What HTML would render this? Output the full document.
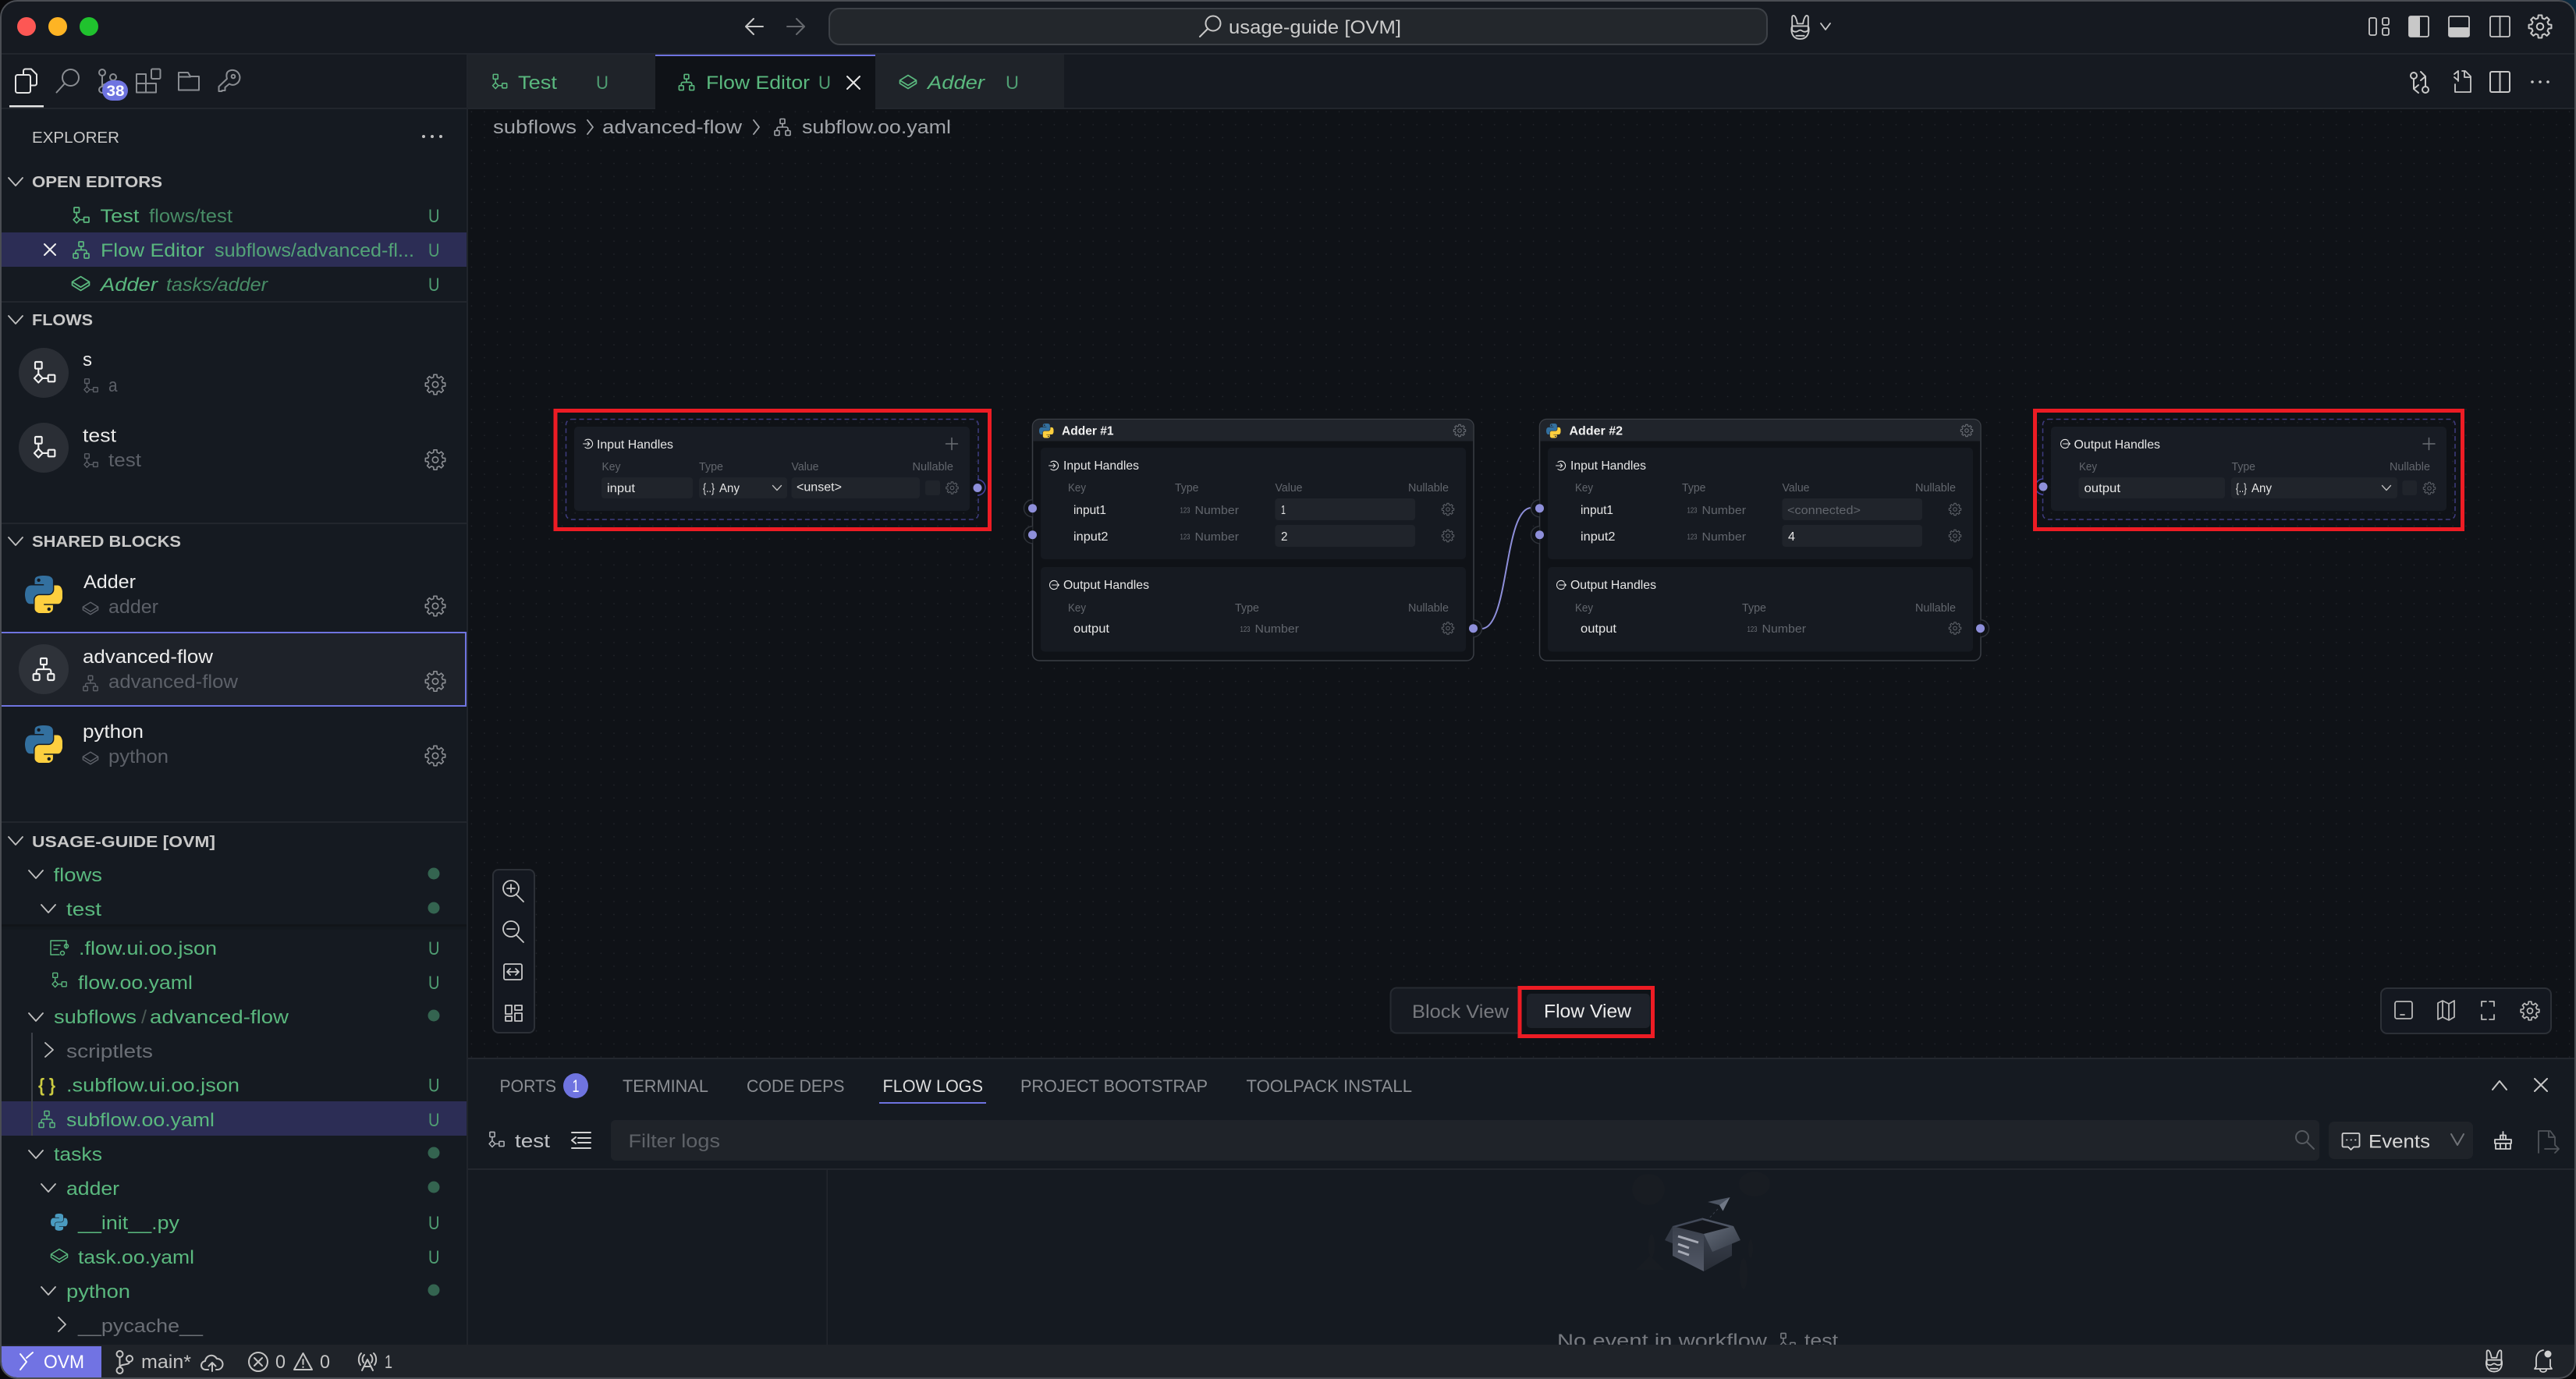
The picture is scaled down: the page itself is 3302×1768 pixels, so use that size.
<!DOCTYPE html>
<html lang="en"><head><meta charset="utf-8"><title>usage-guide [OVM]</title>
<style>
html,body{margin:0;padding:0;background:#000;width:3302px;height:1768px;overflow:hidden}
svg{display:block}
text{font-family:"Liberation Sans",sans-serif;font-size:24px;fill:#ccc;white-space:pre}
.h{font-size:20.5px;font-weight:700;fill:#c8c8c8}
.g{fill:#5ab87e}.gd{fill:#478b65}.u{fill:#4f9d72}
.w{fill:#ececec}.dim{fill:#5c6068}.gr{fill:#6b6f76}
.i{font-style:italic}
.n{font-size:16px;fill:#e6e6e6}.nb{font-size:16px;font-weight:700;fill:#f0f0f0}
.k{font-size:14.5px;fill:#62666d}.v{font-size:15.5px;fill:#e6e6e6}.m{font-size:15px;fill:#62666d}.s{font-size:10px;fill:#6b6f76}
.p{font-size:22px;fill:#8c8f94}
.ic{fill:none;stroke:currentColor;stroke-linecap:round;stroke-linejoin:round}
symbol *{vector-effect:none}
</style></head><body>
<svg xmlns="http://www.w3.org/2000/svg" width="3302" height="1768" viewBox="0 0 3302 1768">
<defs>
<pattern id="dots" x="703" y="690" width="16.6" height="16.6" patternUnits="userSpaceOnUse"><circle cx="1" cy="1" r=".8" fill="#25282e"/></pattern>
<symbol id="gear" viewBox="0 0 24 24"><path class="ic" d="M9.99 3.95L10.28 1.14H13.72L14.01 3.95L16.27 4.89L18.46 3.1L20.9 5.54L19.11 7.73L20.05 9.99L22.86 10.28V13.72L20.05 14.01L19.11 16.27L20.9 18.46L18.46 20.9L16.27 19.11L14.01 20.05L13.72 22.86H10.28L9.99 20.05L7.73 19.11L5.54 20.9L3.1 18.46L4.89 16.27L3.95 14.01L1.14 13.72V10.28L3.95 9.99L4.89 7.73L3.1 5.54L5.54 3.1L7.73 4.89Z"/><circle class="ic" cx="12" cy="12" r="3.2"/></symbol>
<symbol id="flow" viewBox="0 0 24 24"><rect class="ic" x="3" y="1.5" width="6.5" height="6.5" rx=".8"/><path class="ic" d="M6.2 8V13M6.2 13L10.2 17.2L6.2 21.4L2.2 17.2ZM10.2 17.2H15.5"/><rect class="ic" x="15.5" y="14" width="6.5" height="6.5" rx=".8"/></symbol>
<symbol id="sub" viewBox="0 0 24 24"><rect class="ic" x="9" y="1.5" width="6" height="6" rx=".8"/><path class="ic" d="M12 7.5V12M5 16.5V14A2 2 0 0 1 7 12H17A2 2 0 0 1 19 14V16.5"/><rect class="ic" x="2" y="16.5" width="6" height="6" rx="1"/><rect class="ic" x="16" y="16.5" width="6" height="6" rx="1"/></symbol>
<symbol id="task" viewBox="0 0 24 24"><path class="ic" d="M12 3.5L22.5 10L12 16.5L1.5 10ZM1.5 10V14L12 20.5L22.5 14V10"/></symbol>
<symbol id="py" viewBox="0 0 110 110"><path fill="#33709f" d="M54.92.001c-4.584.021-8.961.412-12.812 1.094C30.766 3.099 28.707 7.295 28.707 15.032v10.219h26.813v3.406H18.644c-7.793 0-14.617 4.684-16.752 13.594-2.462 10.213-2.571 16.586 0 27.25 1.906 7.938 6.458 13.594 14.25 13.594h9.219v-12.25c0-8.85 7.657-16.656 16.75-16.656h26.781c7.455 0 13.406-6.138 13.406-13.625V15.033c0-7.266-6.13-12.725-13.406-13.937C64.282.328 59.502-.02 54.92.001zM40.42 8.219c2.77 0 5.031 2.299 5.031 5.125 0 2.816-2.262 5.094-5.031 5.094-2.779 0-5.031-2.277-5.031-5.094 0-2.826 2.252-5.125 5.031-5.125z"/><path fill="#fdcf3f" d="M85.638 28.657v11.906c0 9.231-7.826 17-16.75 17H42.107c-7.336 0-13.406 6.278-13.406 13.625v25.531c0 7.266 6.319 11.54 13.406 13.625 8.487 2.496 16.626 2.947 26.781 0 6.75-1.954 13.406-5.888 13.406-13.625V86.501H55.513v-3.406h40.187c7.793 0 10.696-5.435 13.406-13.594 2.799-8.399 2.68-16.476 0-27.25-1.926-7.757-5.604-13.594-13.406-13.594H85.638zM70.575 93.313c2.779 0 5.031 2.277 5.031 5.094 0 2.826-2.252 5.125-5.031 5.125-2.77 0-5.031-2.299-5.031-5.125 0-2.817 2.261-5.094 5.031-5.094z"/></symbol>
<symbol id="inh" viewBox="0 0 24 24"><path class="ic" d="M5 4.5A10 10 0 1 1 5 19.5M1 12H15M10.5 7.5L15 12L10.5 16.5"/></symbol>
<symbol id="outh" viewBox="0 0 24 24"><path class="ic" d="M19 5.5A9.5 9.5 0 1 0 19 18.5M8 12H23M19 8L23 12L19 16"/></symbol>
<symbol id="bunny" viewBox="0 0 32 32"><path class="ic" d="M6 15V4C6 2 8 1 9.500 3C11 5 12 9 12.500 12H19.500C20 9 21 5 22.500 3C24 1 26 2 26 4V15M6 15C4 19 5 31 16 31S28 19 26 15M6 15H26V19C26 21 24 22 21 22C19 22 18 20 16 20S13 22 11 22C8 22 6 21 6 19ZM11 27H21"/></symbol>
<linearGradient id="bx" x1="0" y1="0" x2="1" y2="1"><stop offset="0" stop-color="#636b79"/><stop offset="1" stop-color="#343a45"/></linearGradient>
<linearGradient id="bl" x1="0" y1="0" x2="0" y2="1"><stop offset="0" stop-color="#3a404c"/><stop offset="1" stop-color="#525866"/></linearGradient>
<linearGradient id="br" x1="0" y1="0" x2="0" y2="1"><stop offset="0" stop-color="#3d4350"/><stop offset="1" stop-color="#272c35"/></linearGradient>
</defs>

<!-- base -->
<rect width="3302" height="1768" fill="#161a21"/>
<rect x="600" y="140" width="2702" height="1216" fill="#0f1217"/>
<rect x="600" y="140" width="2702" height="1216" fill="url(#dots)"/>
<!-- title bar -->
<rect y="68" width="3302" height="2" fill="#22262d"/>
<circle cx="34" cy="34" r="12" fill="#fd5754"/><circle cx="74" cy="34" r="12" fill="#feb424"/><circle cx="114" cy="34" r="12" fill="#20c22e"/>
<g class="ic" color="#c8c8c8" stroke-width="2"><path d="M978 34H957M966 24L956 34L966 44"/></g>
<g class="ic" color="#66696e" stroke-width="2"><path d="M1009 34H1030M1021 24L1031 34L1021 44"/></g>
<rect x="1063" y="11" width="1202" height="46" rx="13" fill="#23272c" stroke="#3d4147" stroke-width="2"/>
<g class="ic" color="#c8c8c8" stroke-width="2"><circle cx="1555" cy="30" r="9.500"/><path d="M1548 37L1538 47"/></g>
<text x="1575" y="43" textLength="221" lengthAdjust="spacingAndGlyphs" fill="#ccc">usage-guide [OVM]</text>
<use href="#bunny" x="2291" y="18" width="33" height="33" color="#c8c8c8" stroke-width="1.800"/>
<g class="ic" color="#c8c8c8" stroke-width="1.800"><path d="M2334 30L2340 38L2346 30"/>
<rect x="3037" y="23" width="9" height="22" rx="2"/><rect x="3054" y="23" width="8" height="9" rx="2"/><rect x="3054" y="36" width="8" height="9" rx="2"/>
<rect x="3088" y="21" width="25" height="26" rx="2"/><rect x="3139" y="21" width="26" height="26" rx="2"/><rect x="3192" y="21" width="25" height="26" rx="2"/><path d="M3204.500 21V47"/></g>
<rect x="3088" y="21" width="14" height="26" rx="2" fill="#c8c8c8"/><rect x="3139" y="35" width="26" height="12" rx="2" fill="#c8c8c8"/>
<use href="#gear" x="3240" y="18" width="32" height="32" color="#c8c8c8" stroke-width="1.500"/>

<!-- tab bar -->
<rect x="600" y="70" width="240" height="68" fill="#1f2329"/>
<rect x="840" y="70" width="282" height="70" fill="#0f1217"/>
<rect x="840" y="70" width="282" height="2" fill="#6e73e0"/>
<rect x="1122" y="70" width="242" height="68" fill="#1f2329"/>
<rect x="1364" y="138" width="1938" height="2" fill="#22262d"/>
<rect x="600" y="138" width="240" height="2" fill="#22262d"/><rect x="1122" y="138" width="242" height="2" fill="#22262d"/>
<use href="#flow" x="629" y="94" width="23" height="22" color="#5ab87e" stroke-width="1.700"/>
<text class="g" x="664" y="114" textLength="50" lengthAdjust="spacingAndGlyphs">Test</text>
<text class="u" x="764" y="114" textLength="16" lengthAdjust="spacingAndGlyphs">U</text>
<use href="#sub" x="868" y="94" width="24" height="23" color="#5ab87e" stroke-width="1.700"/>
<text class="g" x="905" y="114" textLength="133" lengthAdjust="spacingAndGlyphs">Flow Editor</text>
<text class="u" x="1049" y="114" textLength="16" lengthAdjust="spacingAndGlyphs">U</text>
<path class="ic" color="#e8e8e8" stroke-width="2" d="M1086 98L1102 114M1102 98L1086 114"/>
<use href="#task" x="1151" y="93" width="26" height="24" color="#5ab87e" stroke-width="1.700"/>
<text class="g i" x="1189" y="114" textLength="73" lengthAdjust="spacingAndGlyphs">Adder</text>
<text class="u" x="1289" y="114" textLength="17" lengthAdjust="spacingAndGlyphs">U</text>
<g class="ic" color="#c8c8c8" stroke-width="2"><circle cx="3094" cy="97" r="4"/><circle cx="3109" cy="115" r="4"/><path d="M3094 101V114L3100 119M3094 114L3100 109M3109 111V98L3103 92M3109 98L3103 103"/>
<path d="M3146 95L3151 91V104M3146 99L3151 103M3156 91H3160L3167 98V118H3147V108M3159 91V99H3167" stroke-width="1.800"/>
<rect x="3192" y="92" width="25" height="26" rx="2"/><path d="M3204.500 92V118"/></g>
<g fill="#c8c8c8"><circle cx="3246" cy="105" r="1.800"/><circle cx="3256" cy="105" r="1.800"/><circle cx="3266" cy="105" r="1.800"/></g>

<!-- breadcrumbs -->
<g fill="#a2a5aa">
<text x="632" y="171" textLength="107" lengthAdjust="spacingAndGlyphs" style="fill:#a2a5aa">subflows</text>
<text x="772" y="171" textLength="179" lengthAdjust="spacingAndGlyphs" style="fill:#a2a5aa">advanced-flow</text>
<text x="1028" y="171" textLength="191" lengthAdjust="spacingAndGlyphs" style="fill:#a2a5aa">subflow.oo.yaml</text>
</g>
<path class="ic" color="#a2a5aa" stroke-width="1.800" d="M753 154L760 163L753 172M966 154L973 163L966 172"/>
<use href="#sub" x="991" y="151" width="24" height="24" color="#a2a5aa" stroke-width="1.600"/>

<!-- Input node -->
<rect x="725.500" y="537.500" width="528.500" height="128.500" rx="7" fill="none" stroke="#3f3c80" stroke-width="1.500" stroke-dasharray="6 4"/>
<rect x="736" y="547" width="507" height="108" rx="5" fill="#181c24"/>
<use href="#inh" x="747" y="562" width="14" height="14" color="#e6e6e6" stroke-width="1.800"/>
<text class="n" x="765" y="575" textLength="98" lengthAdjust="spacingAndGlyphs">Input Handles</text>
<path class="ic" color="#6a6e74" stroke-width="1.500" d="M1220 561.500V576.500M1212.500 569H1227.500"/>
<text class="k" x="771.500" y="603" textLength="24" lengthAdjust="spacingAndGlyphs">Key</text>
<text class="k" x="896" y="603" textLength="31" lengthAdjust="spacingAndGlyphs">Type</text>
<text class="k" x="1014.500" y="603" textLength="35" lengthAdjust="spacingAndGlyphs">Value</text>
<text class="k" x="1169.500" y="603" textLength="52.500" lengthAdjust="spacingAndGlyphs">Nullable</text>
<rect x="771" y="612" width="117" height="27" rx="4" fill="#20242b"/>
<text class="v" x="778" y="631" textLength="36" lengthAdjust="spacingAndGlyphs">input</text>
<rect x="896" y="612" width="113" height="27" rx="4" fill="#20242b"/>
<text class="v" x="901" y="631" textLength="15" lengthAdjust="spacingAndGlyphs">{..}</text>
<text class="v" x="922" y="631" textLength="26" lengthAdjust="spacingAndGlyphs">Any</text>
<path class="ic" color="#c0c0c0" stroke-width="1.300" d="M990.500 622.500L996 628.500L1001.500 622.500"/>
<rect x="1014.500" y="612" width="164.500" height="27" rx="4" fill="#20242b"/>
<text class="v" x="1021" y="629.500" textLength="58" lengthAdjust="spacingAndGlyphs">&lt;unset&gt;</text>
<rect x="1186" y="616" width="19" height="19" rx="3" fill="#20242b"/>
<use href="#gear" x="1212" y="617" width="17" height="17" color="#5d6168" stroke-width="1.500"/>
<path d="M1253 615A10 10 0 0 1 1253 635" fill="#0f1217" stroke="#4745a0" stroke-width="1.500"/>
<circle cx="1253" cy="625.500" r="5.500" fill="#8e8fda"/>
<rect x="712" y="526.500" width="556.500" height="152" fill="none" stroke="#ed1c24" stroke-width="5"/>

<!-- edge -->
<path d="M1899 806C1935 806 1927 651 1963 651" fill="none" stroke="#8e8fda" stroke-width="2"/>

<!-- Adder 1 -->
<g>
<rect x="1323.500" y="537.500" width="565.500" height="309.500" rx="9" fill="#0f1217" stroke="#3a3e45" stroke-width="1.500"/>
<path d="M1324.500 565.500V546A8 8 0 0 1 1332.500 538.500H1880A8 8 0 0 1 1888 546V565.500Z" fill="#20242b"/>
<use href="#py" x="1332" y="543" width="18.500" height="18.500"/>
<text class="nb" x="1361" y="557.500" textLength="66.500" lengthAdjust="spacingAndGlyphs">Adder #1</text>
<use href="#gear" x="1862.500" y="543.500" width="17" height="17" color="#6b6f76" stroke-width="1.500"/>
<rect x="1334" y="574" width="545" height="143" rx="5" fill="#161a21"/>
<use href="#inh" x="1344" y="590" width="14" height="14" color="#e6e6e6" stroke-width="1.800"/>
<text class="n" x="1363" y="602" textLength="97" lengthAdjust="spacingAndGlyphs">Input Handles</text>
<text class="k" x="1369" y="630" textLength="23" lengthAdjust="spacingAndGlyphs">Key</text>
<text class="k" x="1506" y="630" textLength="30.500" lengthAdjust="spacingAndGlyphs">Type</text>
<text class="k" x="1634.500" y="630" textLength="35" lengthAdjust="spacingAndGlyphs">Value</text>
<text class="k" x="1805" y="630" textLength="52" lengthAdjust="spacingAndGlyphs">Nullable</text>
<text class="v" x="1376" y="659" textLength="42" lengthAdjust="spacingAndGlyphs">input1</text>
<text class="s" x="1512.500" y="657.500" textLength="13" lengthAdjust="spacingAndGlyphs">123</text>
<text class="m" x="1531.500" y="659" textLength="56.500" lengthAdjust="spacingAndGlyphs">Number</text>
<rect x="1634.500" y="639" width="179.500" height="28" rx="4" fill="#20242b"/>
<text class="v" x="1642" y="659" textLength="6" lengthAdjust="spacingAndGlyphs">1</text>
<use href="#gear" x="1847.500" y="644.500" width="17" height="17" color="#5d6168" stroke-width="1.500"/>
<text class="v" x="1376" y="693" textLength="44.500" lengthAdjust="spacingAndGlyphs">input2</text>
<text class="s" x="1512.500" y="691.500" textLength="13" lengthAdjust="spacingAndGlyphs">123</text>
<text class="m" x="1531.500" y="693" textLength="56.500" lengthAdjust="spacingAndGlyphs">Number</text>
<rect x="1634.500" y="673" width="179.500" height="28" rx="4" fill="#20242b"/>
<text class="v" x="1642" y="693" textLength="8.500" lengthAdjust="spacingAndGlyphs">2</text>
<use href="#gear" x="1847.500" y="678.500" width="17" height="17" color="#5d6168" stroke-width="1.500"/>
<rect x="1334" y="727" width="545" height="108.500" rx="5" fill="#161a21"/>
<use href="#outh" x="1344" y="743" width="14" height="14" color="#e6e6e6" stroke-width="1.800"/>
<text class="n" x="1363" y="755" textLength="110" lengthAdjust="spacingAndGlyphs">Output Handles</text>
<text class="k" x="1369" y="784" textLength="23" lengthAdjust="spacingAndGlyphs">Key</text>
<text class="k" x="1583" y="784" textLength="31" lengthAdjust="spacingAndGlyphs">Type</text>
<text class="k" x="1805" y="784" textLength="52" lengthAdjust="spacingAndGlyphs">Nullable</text>
<text class="v" x="1376" y="811" textLength="46" lengthAdjust="spacingAndGlyphs">output</text>
<text class="s" x="1589.500" y="810" textLength="13" lengthAdjust="spacingAndGlyphs">123</text>
<text class="m" x="1608.500" y="811" textLength="56.500" lengthAdjust="spacingAndGlyphs">Number</text>
<use href="#gear" x="1847.500" y="797" width="17" height="17" color="#5d6168" stroke-width="1.500"/>
<path d="M1323.500 640.700A11 11 0 0 0 1323.500 662.700" fill="#0f1217" stroke="#2e3239" stroke-width="1.500"/>
<path d="M1323.500 674.700A11 11 0 0 0 1323.500 696.700" fill="#0f1217" stroke="#2e3239" stroke-width="1.500"/>
<circle cx="1323.500" cy="651.700" r="5.500" fill="#8e8fda"/><circle cx="1323.500" cy="685.700" r="5.500" fill="#8e8fda"/>
<path d="M1888.500 794.700A11 11 0 0 1 1888.500 816.700" fill="#0f1217" stroke="#2e3239" stroke-width="1.500"/>
<circle cx="1888.500" cy="805.700" r="5.500" fill="#8e8fda"/>
</g>

<!-- Adder 2 -->
<g transform="translate(650 0)">
<rect x="1323.500" y="537.500" width="565.500" height="309.500" rx="9" fill="#0f1217" stroke="#3a3e45" stroke-width="1.500"/>
<path d="M1324.500 565.500V546A8 8 0 0 1 1332.500 538.500H1880A8 8 0 0 1 1888 546V565.500Z" fill="#20242b"/>
<use href="#py" x="1332" y="543" width="18.500" height="18.500"/>
<text class="nb" x="1361.500" y="557.500" textLength="68.500" lengthAdjust="spacingAndGlyphs">Adder #2</text>
<use href="#gear" x="1862.500" y="543.500" width="17" height="17" color="#6b6f76" stroke-width="1.500"/>
<rect x="1334" y="574" width="545" height="143" rx="5" fill="#161a21"/>
<use href="#inh" x="1344" y="590" width="14" height="14" color="#e6e6e6" stroke-width="1.800"/>
<text class="n" x="1363" y="602" textLength="97" lengthAdjust="spacingAndGlyphs">Input Handles</text>
<text class="k" x="1369" y="630" textLength="23" lengthAdjust="spacingAndGlyphs">Key</text>
<text class="k" x="1506" y="630" textLength="30.500" lengthAdjust="spacingAndGlyphs">Type</text>
<text class="k" x="1634.500" y="630" textLength="35" lengthAdjust="spacingAndGlyphs">Value</text>
<text class="k" x="1805" y="630" textLength="52" lengthAdjust="spacingAndGlyphs">Nullable</text>
<text class="v" x="1376" y="659" textLength="42" lengthAdjust="spacingAndGlyphs">input1</text>
<text class="s" x="1512.500" y="657.500" textLength="13" lengthAdjust="spacingAndGlyphs">123</text>
<text class="m" x="1531.500" y="659" textLength="56.500" lengthAdjust="spacingAndGlyphs">Number</text>
<rect x="1634.500" y="639" width="179.500" height="28" rx="4" fill="#20242b"/>
<text class="m" x="1641" y="659" textLength="94" lengthAdjust="spacingAndGlyphs">&lt;connected&gt;</text>
<use href="#gear" x="1847.500" y="644.500" width="17" height="17" color="#5d6168" stroke-width="1.500"/>
<text class="v" x="1376" y="693" textLength="44.500" lengthAdjust="spacingAndGlyphs">input2</text>
<text class="s" x="1512.500" y="691.500" textLength="13" lengthAdjust="spacingAndGlyphs">123</text>
<text class="m" x="1531.500" y="693" textLength="56.500" lengthAdjust="spacingAndGlyphs">Number</text>
<rect x="1634.500" y="673" width="179.500" height="28" rx="4" fill="#20242b"/>
<text class="v" x="1642" y="693" textLength="9" lengthAdjust="spacingAndGlyphs">4</text>
<use href="#gear" x="1847.500" y="678.500" width="17" height="17" color="#5d6168" stroke-width="1.500"/>
<rect x="1334" y="727" width="545" height="108.500" rx="5" fill="#161a21"/>
<use href="#outh" x="1344" y="743" width="14" height="14" color="#e6e6e6" stroke-width="1.800"/>
<text class="n" x="1363" y="755" textLength="110" lengthAdjust="spacingAndGlyphs">Output Handles</text>
<text class="k" x="1369" y="784" textLength="23" lengthAdjust="spacingAndGlyphs">Key</text>
<text class="k" x="1583" y="784" textLength="31" lengthAdjust="spacingAndGlyphs">Type</text>
<text class="k" x="1805" y="784" textLength="52" lengthAdjust="spacingAndGlyphs">Nullable</text>
<text class="v" x="1376" y="811" textLength="46" lengthAdjust="spacingAndGlyphs">output</text>
<text class="s" x="1589.500" y="810" textLength="13" lengthAdjust="spacingAndGlyphs">123</text>
<text class="m" x="1608.500" y="811" textLength="56.500" lengthAdjust="spacingAndGlyphs">Number</text>
<use href="#gear" x="1847.500" y="797" width="17" height="17" color="#5d6168" stroke-width="1.500"/>
<path d="M1323.500 640.700A11 11 0 0 0 1323.500 662.700" fill="#0f1217" stroke="#2e3239" stroke-width="1.500"/>
<path d="M1323.500 674.700A11 11 0 0 0 1323.500 696.700" fill="#0f1217" stroke="#2e3239" stroke-width="1.500"/>
<circle cx="1323.500" cy="651.700" r="5.500" fill="#8e8fda"/><circle cx="1323.500" cy="685.700" r="5.500" fill="#8e8fda"/>
<path d="M1888.500 794.700A11 11 0 0 1 1888.500 816.700" fill="#0f1217" stroke="#2e3239" stroke-width="1.500"/>
<circle cx="1888.500" cy="805.700" r="5.500" fill="#8e8fda"/>
</g>

<!-- Output node -->
<rect x="2618.500" y="537.500" width="528.500" height="128.500" rx="7" fill="none" stroke="#3f3c80" stroke-width="1.500" stroke-dasharray="6 4"/>
<rect x="2629" y="547" width="507" height="108" rx="5" fill="#181c24"/>
<use href="#outh" x="2640" y="562" width="14" height="14" color="#e6e6e6" stroke-width="1.800"/>
<text class="n" x="2658.500" y="575" textLength="110.500" lengthAdjust="spacingAndGlyphs">Output Handles</text>
<path class="ic" color="#6a6e74" stroke-width="1.500" d="M3113.500 561.500V576.500M3106 569H3121"/>
<text class="k" x="2665" y="603" textLength="23" lengthAdjust="spacingAndGlyphs">Key</text>
<text class="k" x="2860.500" y="603" textLength="30.500" lengthAdjust="spacingAndGlyphs">Type</text>
<text class="k" x="3063" y="603" textLength="52" lengthAdjust="spacingAndGlyphs">Nullable</text>
<rect x="2664.500" y="612" width="187.500" height="27" rx="4" fill="#20242b"/>
<text class="v" x="2671.500" y="631" textLength="46.500" lengthAdjust="spacingAndGlyphs">output</text>
<rect x="2860" y="612" width="213" height="27" rx="4" fill="#20242b"/>
<text class="v" x="2866" y="631" textLength="14" lengthAdjust="spacingAndGlyphs">{..}</text>
<text class="v" x="2886" y="631" textLength="26" lengthAdjust="spacingAndGlyphs">Any</text>
<path class="ic" color="#c0c0c0" stroke-width="1.300" d="M3053.500 622.500L3059 628.500L3064.500 622.500"/>
<rect x="3079.500" y="616" width="18.500" height="19" rx="3" fill="#20242b"/>
<use href="#gear" x="3105.500" y="617.500" width="17" height="17" color="#5d6168" stroke-width="1.500"/>
<path d="M2619 614A10 10 0 0 0 2619 634" fill="#0f1217" stroke="#4745a0" stroke-width="1.500"/>
<circle cx="2619" cy="624" r="5.500" fill="#8e8fda"/>
<rect x="2608.500" y="526.500" width="548" height="152" fill="none" stroke="#ed1c24" stroke-width="5"/>

<!-- zoom controls -->
<rect x="632" y="1115" width="53" height="209" rx="7" fill="#141820" stroke="#2c3037" stroke-width="2"/>
<g class="ic" color="#c8c8c8" stroke-width="1.800">
<circle cx="655" cy="1139" r="10"/><path d="M662 1147L671 1156M655 1134V1144M650 1139H660"/>
<circle cx="655" cy="1191" r="10"/><path d="M662 1199L671 1208M650 1191H660"/>
<rect x="646" y="1236" width="23" height="20" rx="2"/><path d="M650 1246H665M654 1242L650 1246L654 1250M661 1242L665 1246L661 1250"/>
<rect x="648" y="1289" width="8" height="11"/><rect x="660" y="1289" width="9" height="6"/><rect x="648" y="1303" width="8" height="6"/><rect x="660" y="1299" width="9" height="10"/>
</g>
<!-- view toggle -->
<rect x="1782.500" y="1266.500" width="200" height="58" rx="8" fill="#161a21" stroke="#262a31" stroke-width="2"/>
<text x="1810" y="1305" textLength="124" lengthAdjust="spacingAndGlyphs" style="fill:#77797e">Block View</text>
<rect x="1947" y="1267" width="172" height="62" fill="#0f1217"/>
<rect x="1957" y="1274" width="158" height="44" rx="5" fill="#1e222a"/>
<text class="w" x="1979" y="1304.500" textLength="112" lengthAdjust="spacingAndGlyphs">Flow View</text>
<rect x="1948" y="1266.500" width="170.500" height="62" fill="none" stroke="#ed1c24" stroke-width="5"/>
<rect x="3052" y="1267" width="218" height="58" rx="8" fill="#141820" stroke="#2c3037" stroke-width="2"/>
<g class="ic" color="#b8b8b8" stroke-width="1.800">
<rect x="3070" y="1284" width="22" height="22" rx="2.500"/><path d="M3077 1301H3082"/>
<path d="M3125 1286L3131 1283L3139 1287L3146 1283V1304L3139 1308L3131 1304L3125 1307ZM3131 1283V1304M3139 1287V1308"/>
<path d="M3181 1290V1284H3187M3191 1284H3197V1290M3197 1301V1307H3191M3187 1307H3181V1301"/>
</g>
<use href="#gear" x="3230" y="1283" width="26" height="26" color="#b8b8b8" stroke-width="1.600"/>

<!-- panel -->
<rect x="600" y="1356" width="2702" height="368" fill="#151a21"/>
<rect x="600" y="1356" width="2702" height="2" fill="#23272e"/>
<text class="p" x="640.500" y="1400" textLength="72.500" lengthAdjust="spacingAndGlyphs">PORTS</text>
<rect x="722" y="1376" width="32" height="32" rx="16" fill="#6f74e0"/>
<text x="733.500" y="1400" textLength="9" lengthAdjust="spacingAndGlyphs" style="fill:#fff;font-size:22px">1</text>
<text class="p" x="798" y="1400" textLength="110" lengthAdjust="spacingAndGlyphs">TERMINAL</text>
<text class="p" x="957" y="1400" textLength="125.500" lengthAdjust="spacingAndGlyphs">CODE DEPS</text>
<text x="1131.500" y="1400" textLength="128.500" lengthAdjust="spacingAndGlyphs" style="font-size:22px;fill:#dcdcdc">FLOW LOGS</text>
<text class="p" x="1308" y="1400" textLength="240" lengthAdjust="spacingAndGlyphs">PROJECT BOOTSTRAP</text>
<text class="p" x="1597.500" y="1400" textLength="212.500" lengthAdjust="spacingAndGlyphs">TOOLPACK INSTALL</text>
<rect x="1127" y="1413" width="137" height="2" fill="#6e73e0"/>
<g class="ic" color="#c8c8c8" stroke-width="2"><path d="M3195 1397L3204 1386L3213 1397M3249 1383L3265 1399M3265 1383L3249 1399"/></g>
<use href="#flow" x="625" y="1450" width="23" height="23" color="#b0b3b8" stroke-width="1.600"/>
<text x="660" y="1471" textLength="45" lengthAdjust="spacingAndGlyphs" style="fill:#c0c2c6">test</text>
<g class="ic" color="#d4d4d4" stroke-width="2"><path d="M733 1452H757M741 1459H757M741 1465H757M733 1472H757M738 1458L733 1462L738 1466"/></g>
<rect x="783" y="1436" width="2190" height="52" rx="6" fill="#1f2329"/>
<text x="805.500" y="1471" textLength="117.500" lengthAdjust="spacingAndGlyphs" style="fill:#5e6268">Filter logs</text>
<g class="ic" color="#55595f" stroke-width="2"><circle cx="2951" cy="1458" r="8"/><path d="M2957 1464L2966 1473"/></g>
<rect x="2985" y="1438" width="185" height="48" rx="7" fill="#1f2329"/>
<g class="ic" color="#d0d0d0" stroke-width="1.800"><path d="M3004 1453H3023A1.500 1.500 0 0 1 3024.500 1454.500V1469A1.500 1.500 0 0 1 3023 1470.500H3017L3013.500 1474L3010 1470.500H3004A1.500 1.500 0 0 1 3002.500 1469V1454.500A1.500 1.500 0 0 1 3004 1453Z"/><path d="M3008 1461.500H3008.500M3013.500 1461.500H3014M3019 1461.500H3019.500"/></g>
<text x="3036" y="1471.500" textLength="79" lengthAdjust="spacingAndGlyphs" style="fill:#d8d8d8">Events</text>
<path class="ic" color="#707378" stroke-width="2" d="M3142 1454L3150 1468L3158 1454"/>
<g class="ic" color="#d0d0d0" stroke-width="1.800"><path d="M3208.500 1451V1461M3205 1461V1455.500H3212V1461M3198 1461H3219V1466H3198ZM3199 1466V1473H3218V1466M3205 1466V1473M3212 1466V1473"/></g>
<g class="ic" color="#50545a" stroke-width="1.800"><path d="M3254 1478V1450H3269L3275 1458V1468M3267 1450V1458H3275M3262 1473H3280M3275 1468L3280 1473L3275 1478"/></g>
<rect x="600" y="1498" width="2702" height="2" fill="#23272e"/>
<rect x="1059.500" y="1500" width="1.500" height="224" fill="#22262d"/>
<!-- empty illustration -->
<g fill="#181c22">
<ellipse cx="2113" cy="1525" rx="21" ry="20"/><ellipse cx="2249" cy="1518" rx="20" ry="16"/>
<path d="M2097 1628L2115 1610L2133 1628Z"/><ellipse cx="2235" cy="1633" rx="5" ry="20"/><ellipse cx="2117" cy="1597" rx="4" ry="15"/><ellipse cx="2244" cy="1601" rx="3" ry="12"/>
</g>
<path d="M2189 1541L2217.500 1535L2208.500 1552.500L2204 1545Z" fill="#4c5462"/>
<path d="M2204 1545L2217.500 1535L2208.500 1552.500Z" fill="#707886"/>
<path d="M2202 1550L2188 1565" stroke="#3a404b" stroke-width="1" stroke-dasharray="3 3" fill="none"/>
<path d="M2144 1572L2182 1561.500L2222 1572L2184 1582Z" fill="#14171d"/>
<path d="M2144 1572L2134 1590L2146 1595Z" fill="#333945"/>
<path d="M2182 1561.500L2222 1572L2219 1574L2182 1564Z" fill="#4e5564"/>
<path d="M2144 1572L2182 1561.500L2183 1564L2146 1574Z" fill="#424958"/>
<path d="M2144 1572L2184 1582V1630L2144 1610Z" fill="url(#bl)"/>
<path d="M2184 1582L2220 1573V1610L2184 1630Z" fill="url(#br)"/>
<path d="M2222 1572L2231 1590L2195 1605L2184 1582Z" fill="url(#bx)"/>
<g stroke="#a6aab5" stroke-width="3"><path d="M2151 1585L2177 1593M2151 1595L2165 1600M2151 1604L2165 1609"/></g>
<text x="1996" y="1727" textLength="269" lengthAdjust="spacingAndGlyphs" style="fill:#777a80">No event in workflow</text>
<use href="#flow" x="2280" y="1708" width="23" height="23" color="#777a80" stroke-width="1.600"/>
<text x="2313" y="1727" textLength="43" lengthAdjust="spacingAndGlyphs" style="fill:#777a80">test</text>

<!-- sidebar -->
<rect x="0" y="139" width="598" height="1585" fill="#151a21"/>
<rect x="598" y="70" width="2" height="1654" fill="#20242b"/>
<rect x="0" y="138" width="598" height="2" fill="#22262d"/>
<!-- activity -->
<g class="ic" color="#e4e4e4" stroke-width="2"><path d="M30 96V91A2.500 2.500 0 0 1 32.500 88.500H40L47 95.500V107A2.500 2.500 0 0 1 44.500 109.500H39"/><rect x="20" y="96" width="19" height="23" rx="2.500"/></g>
<rect x="12" y="135" width="44" height="2.500" fill="#e8e8e8"/>
<g class="ic" color="#8a8d92" stroke-width="2">
<circle cx="90.500" cy="99.500" r="10.500"/><path d="M83 107L72.500 118.500"/>
<circle cx="131" cy="93" r="4"/><circle cx="131" cy="115" r="4"/><circle cx="145" cy="99" r="4"/><path d="M131 97V111M145 103C145 108 131 106 131 111"/>
<path d="M175 95H187V107H200V118.500H175ZM175 107H187V118.500"/><rect x="194" y="88.500" width="11.500" height="12.500" rx="1.500"/>
<path d="M229 93H241L244 98H255V115.500H229ZM229 98.500H244"/>
<path d="M292 92A9.500 9.500 0 1 1 302 108C299.500 109.500 296 109 294 107.500L288.500 112V116H284.500V117H280.500V111L291 101C290 98 290 94 292 92Z"/><circle cx="299" cy="98" r="2.300"/>
</g>
<rect x="131" y="103" width="33" height="26" rx="13" fill="#6f74e0"/>
<text x="136.500" y="123" textLength="23" lengthAdjust="spacingAndGlyphs" style="font-size:19px;font-weight:700;fill:#fff">38</text>

<text x="41" y="183" textLength="112" lengthAdjust="spacingAndGlyphs" style="font-size:20.5px;fill:#c8c8c8">EXPLORER</text>
<g fill="#c0c0c0"><circle cx="543" cy="175" r="2"/><circle cx="554" cy="175" r="2"/><circle cx="565" cy="175" r="2"/></g>

<!-- open editors -->
<path class="ic" color="#c0c0c0" stroke-width="1.800" d="M11 228L20 238L29 228M11 405L20 415L29 405M11 689L20 699L29 689M11 1073L20 1083L29 1073"/>
<text class="h" x="41" y="240" textLength="167" lengthAdjust="spacingAndGlyphs">OPEN EDITORS</text>
<use href="#flow" x="92" y="264" width="24" height="25" color="#5ab87e" stroke-width="1.700"/>
<text class="g" x="128.500" y="285" textLength="50" lengthAdjust="spacingAndGlyphs">Test</text>
<text class="gd" x="191" y="285" textLength="107" lengthAdjust="spacingAndGlyphs">flows/test</text>
<text class="u" x="549" y="285" textLength="14.500" lengthAdjust="spacingAndGlyphs">U</text>
<rect y="298" width="598" height="44" fill="#2c2d55"/>
<path class="ic" color="#f0f0f0" stroke-width="2" d="M57 313L71 327M71 313L57 327"/>
<use href="#sub" x="92" y="308" width="24" height="25" color="#5ab87e" stroke-width="1.700"/>
<text class="g" x="129" y="329" textLength="133" lengthAdjust="spacingAndGlyphs">Flow Editor</text>
<text class="g" x="275" y="329" textLength="256" lengthAdjust="spacingAndGlyphs" style="opacity:.85">subflows/advanced-fl...</text>
<text class="u" x="549" y="329" textLength="14.500" lengthAdjust="spacingAndGlyphs">U</text>
<use href="#task" x="90" y="351" width="27" height="25" color="#5ab87e" stroke-width="1.700"/>
<text class="g i" x="129" y="373" textLength="73" lengthAdjust="spacingAndGlyphs">Adder</text>
<text class="gd i" x="213" y="373" textLength="130" lengthAdjust="spacingAndGlyphs">tasks/adder</text>
<text class="u" x="549" y="373" textLength="14.500" lengthAdjust="spacingAndGlyphs">U</text>
<rect y="386" width="598" height="2" fill="#22262d"/>

<!-- flows -->
<text class="h" x="41" y="417" textLength="78" lengthAdjust="spacingAndGlyphs">FLOWS</text>
<circle cx="56" cy="478" r="32" fill="#2a2e35"/>
<use href="#flow" x="41" y="462" width="32" height="32" color="#f0f0f0" stroke-width="1.600"/>
<text class="w" x="106" y="469" textLength="12" lengthAdjust="spacingAndGlyphs">s</text>
<use href="#flow" x="106" y="484" width="21" height="22" color="#5c6068" stroke-width="1.600"/>
<text class="dim" x="139" y="502" textLength="11.500" lengthAdjust="spacingAndGlyphs">a</text>
<use href="#gear" x="544" y="479" width="28" height="28" color="#8a8d92" stroke-width="1.400"/>
<circle cx="56" cy="574" r="32" fill="#2a2e35"/>
<use href="#flow" x="41" y="558" width="32" height="32" color="#f0f0f0" stroke-width="1.600"/>
<text class="w" x="106" y="566.500" textLength="43" lengthAdjust="spacingAndGlyphs">test</text>
<use href="#flow" x="106" y="580" width="21" height="22" color="#5c6068" stroke-width="1.600"/>
<text class="dim" x="139" y="598" textLength="42" lengthAdjust="spacingAndGlyphs">test</text>
<use href="#gear" x="544" y="575.500" width="28" height="28" color="#8a8d92" stroke-width="1.400"/>
<rect y="670" width="598" height="2" fill="#22262d"/>

<!-- shared blocks -->
<text class="h" x="41" y="701" textLength="191" lengthAdjust="spacingAndGlyphs">SHARED BLOCKS</text>
<use href="#py" x="32" y="738" width="48" height="48"/>
<text class="w" x="107" y="754" textLength="67" lengthAdjust="spacingAndGlyphs">Adder</text>
<use href="#task" x="104" y="769" width="24" height="22" color="#5c6068" stroke-width="1.600"/>
<text class="dim" x="139" y="786" textLength="64" lengthAdjust="spacingAndGlyphs">adder</text>
<use href="#gear" x="544" y="763" width="28" height="28" color="#8a8d92" stroke-width="1.400"/>
<rect x="1" y="811" width="596" height="94" fill="#1e2229" stroke="#6f74e0" stroke-width="2"/>
<circle cx="56" cy="858" r="32" fill="#2e3239"/>
<use href="#sub" x="40" y="842" width="32" height="32" color="#f0f0f0" stroke-width="1.600"/>
<text class="w" x="106" y="850" textLength="167" lengthAdjust="spacingAndGlyphs">advanced-flow</text>
<use href="#sub" x="105" y="865" width="22" height="22" color="#5c6068" stroke-width="1.600"/>
<text class="dim" x="139" y="882" textLength="166" lengthAdjust="spacingAndGlyphs">advanced-flow</text>
<use href="#gear" x="544" y="859.500" width="28" height="28" color="#8a8d92" stroke-width="1.400"/>
<use href="#py" x="32" y="930" width="48" height="48"/>
<text class="w" x="106" y="946" textLength="78" lengthAdjust="spacingAndGlyphs">python</text>
<use href="#task" x="104" y="961" width="24" height="22" color="#5c6068" stroke-width="1.600"/>
<text class="dim" x="139" y="978" textLength="77" lengthAdjust="spacingAndGlyphs">python</text>
<use href="#gear" x="544" y="955" width="28" height="28" color="#8a8d92" stroke-width="1.400"/>
<rect y="1053" width="598" height="2" fill="#22262d"/>

<!-- tree -->
<text class="h" x="41" y="1086" textLength="235" lengthAdjust="spacingAndGlyphs">USAGE-GUIDE [OVM]</text>
<g class="ic" color="#c0c0c0" stroke-width="1.800"><path d="M37 1116L46 1126L55 1116M53 1160L62 1170L71 1160M37 1299L46 1309L55 1299M37 1475L46 1485L55 1475M53 1518L62 1528L71 1518M53 1650L62 1660L71 1650M58 1337L68 1346L58 1355M75 1689L84 1698L75 1707"/></g>
<rect y="1185" width="598" height="3" fill="#0f1217" opacity=".7"/>
<rect y="1188" width="598" height="4" fill="#0f1217" opacity=".25"/>
<g fill="#346450"><circle cx="556" cy="1120" r="7.500"/><circle cx="556" cy="1164" r="7.500"/><circle cx="556" cy="1302" r="7.500"/><circle cx="556" cy="1478" r="7.500"/><circle cx="556" cy="1522" r="7.500"/><circle cx="556" cy="1654" r="7.500"/></g>
<text class="g" x="68.500" y="1130" textLength="62.500" lengthAdjust="spacingAndGlyphs">flows</text>
<text class="g" x="85" y="1174" textLength="45" lengthAdjust="spacingAndGlyphs">test</text>
<g class="ic" color="#5ab87e" stroke-width="1.500"><path d="M65 1206H85V1216M65 1206V1224H76M69 1212H77M69 1217H74"/><circle cx="80" cy="1222" r="2.500"/><circle cx="85" cy="1213" r="2.500"/></g>
<text class="g" x="101" y="1224" textLength="177" lengthAdjust="spacingAndGlyphs">.flow.ui.oo.json</text>
<text class="u" x="549" y="1224" textLength="14.500" lengthAdjust="spacingAndGlyphs">U</text>
<use href="#flow" x="65" y="1246" width="22" height="22" color="#5ab87e" stroke-width="1.500"/>
<text class="g" x="100" y="1268" textLength="147" lengthAdjust="spacingAndGlyphs">flow.oo.yaml</text>
<text class="u" x="549" y="1268" textLength="14.500" lengthAdjust="spacingAndGlyphs">U</text>
<text class="g" x="69" y="1312" textLength="106" lengthAdjust="spacingAndGlyphs">subflows</text>
<text x="181" y="1312" textLength="7" lengthAdjust="spacingAndGlyphs" style="fill:#4c5a55">/</text>
<text class="g" x="192" y="1312" textLength="178" lengthAdjust="spacingAndGlyphs">advanced-flow</text>
<text class="gr" x="85" y="1356" textLength="111" lengthAdjust="spacingAndGlyphs">scriptlets</text>
<text x="49" y="1399.500" textLength="22" lengthAdjust="spacingAndGlyphs" style="fill:#cbcb41;font-weight:700">{ }</text>
<text class="g" x="85" y="1399.500" textLength="222" lengthAdjust="spacingAndGlyphs">.subflow.ui.oo.json</text>
<text class="u" x="549" y="1399.500" textLength="14.500" lengthAdjust="spacingAndGlyphs">U</text>
<rect y="1412" width="598" height="44" fill="#2c2d55"/>
<rect x="40" y="1324" width="2" height="132" fill="#3c4048"/>
<use href="#sub" x="48" y="1423" width="24" height="24" color="#5ab87e" stroke-width="1.500"/>
<text class="g" x="85" y="1444" textLength="190" lengthAdjust="spacingAndGlyphs">subflow.oo.yaml</text>
<text class="u" x="549" y="1444" textLength="14.500" lengthAdjust="spacingAndGlyphs">U</text>
<text class="g" x="69" y="1488" textLength="62" lengthAdjust="spacingAndGlyphs">tasks</text>
<text class="g" x="85" y="1532" textLength="68" lengthAdjust="spacingAndGlyphs">adder</text>
<g transform="translate(65 1556) scale(.195)"><path fill="#4a9bc0" d="M54.92.001c-4.584.021-8.961.412-12.812 1.094C30.766 3.099 28.707 7.295 28.707 15.032v10.219h26.813v3.406H18.644c-7.793 0-14.617 4.684-16.752 13.594-2.462 10.213-2.571 16.586 0 27.25 1.906 7.938 6.458 13.594 14.25 13.594h9.219v-12.25c0-8.85 7.657-16.656 16.75-16.656h26.781c7.455 0 13.406-6.138 13.406-13.625V15.033c0-7.266-6.13-12.725-13.406-13.937C64.282.328 59.502-.02 54.92.001z"/><path fill="#4a9bc0" d="M85.638 28.657v11.906c0 9.231-7.826 17-16.75 17H42.107c-7.336 0-13.406 6.278-13.406 13.625v25.531c0 7.266 6.319 11.54 13.406 13.625 8.487 2.496 16.626 2.947 26.781 0 6.75-1.954 13.406-5.888 13.406-13.625V86.501H55.513v-3.406h40.187c7.793 0 10.696-5.435 13.406-13.594 2.799-8.399 2.68-16.476 0-27.25-1.926-7.757-5.604-13.594-13.406-13.594H85.638z"/></g>
<text class="g" x="100" y="1576" textLength="130" lengthAdjust="spacingAndGlyphs">__init__.py</text>
<text class="u" x="549" y="1576" textLength="14.500" lengthAdjust="spacingAndGlyphs">U</text>
<use href="#task" x="63" y="1598" width="26" height="24" color="#5ab87e" stroke-width="1.500"/>
<text class="g" x="100" y="1620" textLength="149" lengthAdjust="spacingAndGlyphs">task.oo.yaml</text>
<text class="u" x="549" y="1620" textLength="14.500" lengthAdjust="spacingAndGlyphs">U</text>
<text class="g" x="85" y="1664" textLength="82" lengthAdjust="spacingAndGlyphs">python</text>
<text class="gr" x="100" y="1708" textLength="160" lengthAdjust="spacingAndGlyphs">__pycache__</text>

<!-- status bar -->
<rect y="1724" width="3302" height="44" fill="#1f2329"/>
<path d="M2 1726H130V1766H22A20 20 0 0 1 2 1746Z" fill="#7173e3"/>
<path class="ic" color="#fff" stroke-width="2" d="M26 1736L34 1746L26 1756M42 1734L34 1741"/>
<text x="56" y="1754" textLength="52" lengthAdjust="spacingAndGlyphs" style="fill:#fff">OVM</text>
<g class="ic" color="#c4c4c4" stroke-width="2">
<circle cx="153.500" cy="1736" r="4"/><circle cx="153.500" cy="1757" r="4"/><circle cx="166" cy="1742" r="4"/><path d="M153.500 1740V1753M166 1746C166 1751 153.500 1748 153.500 1753"/>
<path d="M267 1756H264A5.500 5.500 0 0 1 263 1745A8 8 0 0 1 278 1742A7 7 0 0 1 279 1756H277M272 1758V1747M267.500 1751.500L272 1747L276.500 1751.500"/>
<circle cx="331" cy="1746" r="12"/><path d="M326 1741L336 1751M336 1741L326 1751"/>
<path d="M388.500 1735L400 1756H377ZM388.500 1743V1749M388.500 1752.500V1753"/>
<path d="M471 1743L464 1757M471 1743L478 1757M466.500 1752H475.500M467 1737C464 1740 464 1744 466 1747M475 1737C478 1740 478 1744 476 1747M463 1735C459 1739 459 1746 462 1750M479 1735C483 1739 483 1746 480 1750"/>
</g>
<text x="181" y="1754" textLength="64" lengthAdjust="spacingAndGlyphs" style="fill:#c4c4c4">main*</text>
<text x="353" y="1754" textLength="13" lengthAdjust="spacingAndGlyphs" style="fill:#c4c4c4">0</text>
<text x="410" y="1754" textLength="13" lengthAdjust="spacingAndGlyphs" style="fill:#c4c4c4">0</text>
<text x="493" y="1754" textLength="10" lengthAdjust="spacingAndGlyphs" style="fill:#c4c4c4">1</text>
<use href="#bunny" x="3182" y="1729" width="30" height="31" color="#d0d0d0" stroke-width="1.900"/>
<g class="ic" color="#d0d0d0" stroke-width="1.800"><path d="M3260 1731C3254 1732 3251 1737 3251 1743V1752L3249 1755H3271L3269 1752V1743M3256 1756C3256 1760 3264 1760 3264 1756"/></g>
<circle cx="3266" cy="1736" r="4.500" fill="#d0d0d0"/>

<!-- window frame -->
<g fill="#0a0a0c">
<path d="M0 0H22A22 22 0 0 0 0 22Z"/><path d="M3302 0H3280A22 22 0 0 1 3302 22Z" fill="#0c2a40"/>
<path d="M0 1768H22A22 22 0 0 1 0 1746Z"/><path d="M3302 1768H3280A22 22 0 0 0 3302 1746Z"/>
</g>
<rect x="1" y="1" width="3300" height="1766" rx="21" fill="none" stroke="#4a4d53" stroke-width="2"/>
</svg>
</body></html>
